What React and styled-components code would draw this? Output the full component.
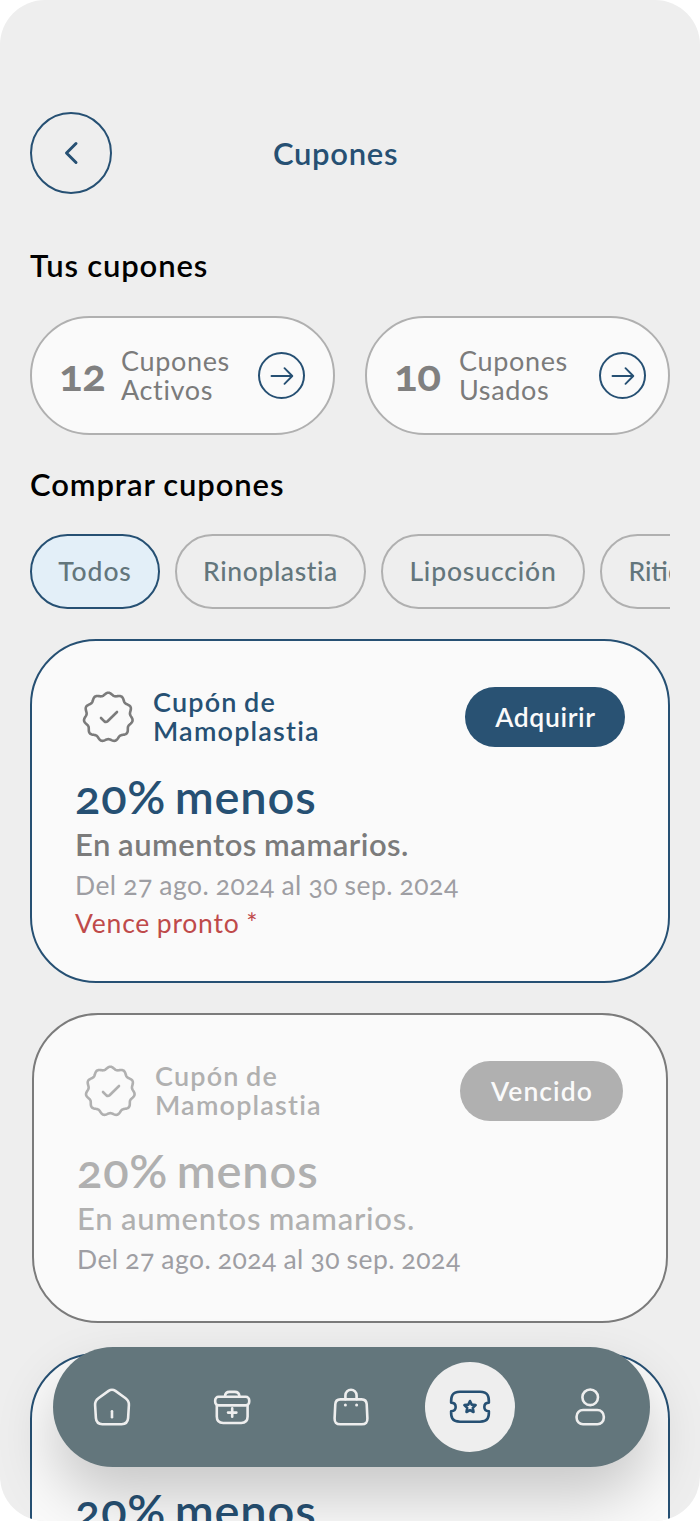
import React from 'react';
import styled, { createGlobalStyle } from 'styled-components';

const GlobalStyle = createGlobalStyle`
  * { box-sizing: border-box; }
  body {
    margin: 0;
    background: #ffffff;
    font-family: Lato, 'Open Sans', sans-serif;
    font-variant-numeric: oldstyle-nums;
    font-variant-ligatures: none;
  }
  button {
    font-family: inherit;
    margin: 0;
    padding: 0;
  }
  h1, h2, h3, p { margin: 0; }
`;

const colors = {
  navy: '#265073',
  slate: '#63767c',
  grey: '#7b7b7b',
  muted: '#b0b0b0',
  date: '#9e9ea3',
  danger: '#bf4a4a',
  surface: '#fafafa',
  background: '#eeeeee',
};

const Screen = styled.div`
  position: relative;
  width: 700px;
  height: 1521px;
  overflow: hidden;
  border-radius: 45px;
  background: ${colors.background};
  padding: 112px 30px 0;
`;

const Header = styled.header`
  display: grid;
  grid-template-columns: 82px 1fr 82px;
  align-items: center;
  width: 611px;
  height: 82px;
`;

const BackButton = styled.button`
  display: flex;
  align-items: center;
  justify-content: center;
  width: 82px;
  height: 82px;
  border: 2px solid ${colors.navy};
  border-radius: 50%;
  background: none;
  color: ${colors.navy};
`;

const PageTitle = styled.h1`
  padding-bottom: 1px;
  color: ${colors.navy};
  font-size: 31px;
  font-weight: 600;
  letter-spacing: 0.7px;
  line-height: 36px;
  text-align: center;
`;

const SectionTitle = styled.h2`
  margin-top: ${props => props.$top}px;
  color: #000000;
  font-size: 31px;
  font-weight: 600;
  letter-spacing: 0.9px;
  word-spacing: -0.5px;
  line-height: 36px;
`;

const StatRow = styled.div`
  display: flex;
  gap: 30px;
  margin-top: 33px;
`;

const StatPill = styled.div`
  display: flex;
  align-items: center;
  width: 305px;
  height: 119px;
  padding: 0 ${props => props.$end}px 0 27px;
  border: 2px solid ${colors.muted};
  border-radius: 60px;
  background: ${colors.surface};
  color: ${colors.grey};
`;

const StatCount = styled.span`
  width: ${props => props.$width}px;
  padding-bottom: 3px;
  color: #808080;
  font-size: 44px;
  font-weight: 700;
  letter-spacing: -0.5px;
  line-height: 50px;
`;

const StatLabel = styled.span`
  flex: 1;
  padding-bottom: 1px;
  font-size: 27px;
  letter-spacing: 0.65px;
  line-height: 29.5px;
`;

const RoundLink = styled.button`
  display: flex;
  align-items: center;
  justify-content: center;
  width: 47px;
  height: 47px;
  border: 2px solid ${colors.navy};
  border-radius: 50%;
  background: none;
  color: ${colors.navy};
`;

const ChipRow = styled.div`
  display: flex;
  gap: 15px;
  margin-top: 32px;
  overflow: hidden;
`;

const Chip = styled.button`
  flex: none;
  width: ${props => props.$width}px;
  height: 75px;
  padding-bottom: 1px;
  border: 2px solid ${props => (props.$active ? colors.navy : colors.muted)};
  border-radius: 38px;
  background: ${props => (props.$active ? '#e3eff8' : 'transparent')};
  color: ${colors.slate};
  font-size: 26.5px;
  font-weight: 500;
  letter-spacing: ${props => props.$tracking}px;
  line-height: 32px;
`;

const CouponList = styled.div`
  display: flex;
  flex-direction: column;
  gap: 30px;
  margin-top: 30px;
`;

const Card = styled.article`
  flex: none;
  height: ${props => (props.$expired ? 310 : 344)}px;
  margin: 0 ${props => (props.$expired ? 2 : 0)}px;
  padding: 46px 43px 0;
  border: 2px solid ${props => (props.$expired ? colors.grey : colors.navy)};
  border-radius: 66px;
  background: ${colors.surface};
  color: ${props => (props.$expired ? colors.muted : colors.navy)};
`;

const CardHead = styled.div`
  display: flex;
  align-items: center;
  height: 60px;
`;

const Seal = styled.svg`
  flex: none;
  margin: 0 12px 0 0;
  color: ${props => (props.$expired ? colors.muted : colors.grey)};
`;

const CardName = styled.h3`
  flex: 1;
  padding-bottom: 2px;
  font-size: 27px;
  font-weight: 600;
  letter-spacing: 1.2px;
  word-spacing: -1.5px;
  line-height: 29.5px;
`;

const ActionButton = styled.button`
  width: ${props => (props.$expired ? 163 : 160)}px;
  height: 60px;
  padding: 0 0 1px 1px;
  border: none;
  border-radius: 30px;
  background: ${props => (props.$expired ? colors.muted : '#295273')};
  color: #fafafa;
  font-size: 26.5px;
  font-weight: 600;
  letter-spacing: ${props => (props.$expired ? 1.05 : 0.65)}px;
  line-height: 32px;
`;

const Discount = styled.p`
  margin-top: 22px;
  font-size: 47px;
  font-weight: 600;
  letter-spacing: 0.8px;
  word-spacing: -4px;
  line-height: 54px;
`;

const Description = styled.p`
  padding-top: 1px;
  color: ${props => (props.$expired ? colors.muted : colors.grey)};
  font-size: 31px;
  font-weight: ${props => (props.$expired ? 500 : 600)};
  letter-spacing: ${props => (props.$expired ? 0.75 : 0.5)}px;
  word-spacing: -1px;
  line-height: 40px;
`;

const Dates = styled.p`
  padding-top: 1px;
  color: ${colors.date};
  font-size: 26.5px;
  letter-spacing: 0.45px;
  word-spacing: -0.6px;
  line-height: 40px;
`;

const Warning = styled.p`
  color: ${colors.danger};
  font-size: 26.5px;
  letter-spacing: 0.8px;
  word-spacing: -1px;
  line-height: 36px;
`;

const NavBar = styled.nav`
  position: absolute;
  left: 52.5px;
  bottom: 54.5px;
  display: flex;
  align-items: center;
  width: 597px;
  height: 120px;
  border-radius: 60px;
  background: ${colors.slate};
  box-shadow: 0 30px 60px rgba(0, 0, 0, 0.2);
`;

const NavItem = styled.div`
  flex: 1;
  display: flex;
  justify-content: center;
`;

const NavButton = styled.button`
  display: flex;
  align-items: center;
  justify-content: center;
  width: 90px;
  height: 90px;
  border: none;
  border-radius: 50%;
  background: ${props => (props.$active ? colors.background : 'transparent')};
  color: ${props => (props.$active ? colors.navy : colors.background)};
`;

// Closed wavy outline with eleven lobes
const sealPath = (() => {
  const points = [];
  for (let deg = 0; deg < 360; deg += 2) {
    const t = (deg * Math.PI) / 180;
    const r = 23.2 + 1.3 * Math.cos(11 * t);
    points.push(`${(33.3 + r * Math.sin(t)).toFixed(2)} ${(30.2 - r * Math.cos(t)).toFixed(2)}`);
  }
  return `M${points.join('L')}Z`;
})();

const SealIcon = ({ expired }) => (
  <Seal
    $expired={expired}
    width="66"
    height="60"
    viewBox="0 0 66 60"
    fill="none"
    stroke="currentColor"
    strokeWidth="2.6"
    strokeLinecap="round"
    strokeLinejoin="round"
  >
    <path d={sealPath} />
    <path d="M26 31 L29.4 34.4 Q31 35.6 32.6 34.2 L42 25" />
  </Seal>
);

const NavIcon = ({ children }) => (
  <svg
    width="48"
    height="48"
    viewBox="0 0 48 48"
    fill="none"
    stroke="currentColor"
    strokeWidth="2.6"
    strokeLinecap="round"
    strokeLinejoin="round"
  >
    {children}
  </svg>
);

const HomeIcon = () => (
  <NavIcon>
    <path d="M20.6 7.9Q24 5.6 27.4 7.9L37.6 15.2Q41.1 17.8 40.9 22L40.1 35.2Q39.6 41.2 33.6 41.2H14.4Q8.4 41.2 7.9 35.2L7.1 22Q6.9 17.8 10.4 15.2Z" />
    <path d="M24 28.3v6" />
  </NavIcon>
);

const KitIcon = () => (
  <NavIcon>
    <rect x="7.2" y="13.8" width="34" height="8.6" rx="3.4" />
    <path d="M8.8 22.6V33.6Q8.8 40 15.2 40H33.2Q39.6 40 39.6 33.6V22.6" />
    <path d="M17 13.4Q17.2 8.9 21.6 8.9H26.8Q31.2 8.9 31.4 13.4" />
    <path d="M24.2 25.4v8.4M20 29.6h8.4" />
  </NavIcon>
);

const BagIcon = () => (
  <NavIcon>
    <path d="M13.4 16.4H34.6Q39.4 16.4 39.7 21.2L40.4 35.4Q40.6 41.3 34.8 41.3H13.2Q7.4 41.3 7.6 35.4L8.3 21.2Q8.6 16.4 13.4 16.4Z" />
    <path d="M18.4 16.2V12.4A5.6 5.6 0 0 1 29.6 12.4V16.2" />
    <circle cx="18.4" cy="22" r="1.5" fill="currentColor" stroke="none" />
    <circle cx="29.6" cy="22" r="1.5" fill="currentColor" stroke="none" />
  </NavIcon>
);

const CouponIcon = () => (
  <NavIcon>
    <path d="M5.1 19.6C5 14 5.6 8.7 14 8.7H34C42.4 8.7 43 14 42.9 19.6C36.8 20 36.8 27.8 42.9 28.2C43 33.8 42.4 38.7 34 38.7H14C5.6 38.7 5 33.8 5.1 28.2C11.2 27.8 11.2 20 5.1 19.6Z" />
    <path d="M24 18L25.7 21.6L29.6 22.1L26.8 24.9L27.5 29L24 27.1L20.5 29L21.2 24.9L18.4 22.1L22.3 21.6Z" />
  </NavIcon>
);

const UserIcon = () => (
  <NavIcon>
    <circle cx="24.2" cy="14.3" r="7.8" />
    <rect x="10.6" y="27" width="27.2" height="14.2" rx="6.4" />
  </NavIcon>
);

const StatCard = ({ count, countWidth, status, end }) => (
  <StatPill $end={end}>
    <StatCount $width={countWidth}>{count}</StatCount>
    <StatLabel>
      Cupones
      <br />
      {status}
    </StatLabel>
    <RoundLink>
      <svg width="26" height="20" viewBox="0 0 26 20" fill="none" stroke="currentColor" strokeWidth="1.9" strokeLinecap="round" strokeLinejoin="round">
        <path d="M2.5 10H23M15.5 2.2L23.3 10L15.5 17.8" />
      </svg>
    </RoundLink>
  </StatPill>
);

const CouponCard = ({ expired, soon }) => (
  <Card $expired={expired}>
    <CardHead>
      <SealIcon expired={expired} />
      <CardName>
        Cupón de
        <br />
        Mamoplastia
      </CardName>
      <ActionButton $expired={expired}>{expired ? 'Vencido' : 'Adquirir'}</ActionButton>
    </CardHead>
    <Discount>20% menos</Discount>
    <Description $expired={expired}>En aumentos mamarios.</Description>
    <Dates>Del 27 ago. 2024 al 30 sep. 2024</Dates>
    {soon && <Warning>Vence pronto *</Warning>}
  </Card>
);

const categories = [
  { name: 'Todos', width: 130, tracking: 0.9 },
  { name: 'Rinoplastia', width: 191, tracking: 0.6 },
  { name: 'Liposucción', width: 204, tracking: 0.85 },
  { name: 'Ritidoplastia', width: 202, tracking: 0 },
];

const navItems = [
  { id: 'home', Icon: HomeIcon },
  { id: 'kit', Icon: KitIcon },
  { id: 'bag', Icon: BagIcon },
  { id: 'coupons', Icon: CouponIcon },
  { id: 'user', Icon: UserIcon },
];

const App = () => (
  <>
    <GlobalStyle />
    <Screen>
      <Header>
        <BackButton>
          <svg width="24" height="28" viewBox="0 0 24 28" fill="none" stroke="currentColor" strokeWidth="3" strokeLinecap="round" strokeLinejoin="round">
            <path d="M17 4.5L7.5 14L17 23.5" />
          </svg>
        </BackButton>
        <PageTitle>Cupones</PageTitle>
      </Header>

      <SectionTitle $top={53}>Tus cupones</SectionTitle>
      <StatRow>
        <StatCard count="12" countWidth={62} status="Activos" end={28} />
        <StatCard count="10" countWidth={65} status="Usados" end={22} />
      </StatRow>

      <SectionTitle $top={31}>Comprar cupones</SectionTitle>
      <ChipRow>
        {categories.map((category, index) => (
          <Chip
            key={category.name}
            $width={category.width}
            $tracking={category.tracking}
            $active={index === 0}
          >
            {category.name}
          </Chip>
        ))}
      </ChipRow>

      <CouponList>
        <CouponCard soon />
        <CouponCard expired />
        <CouponCard soon />
      </CouponList>

      <NavBar>
        {navItems.map(({ id, Icon }) => (
          <NavItem key={id}>
            <NavButton $active={id === 'coupons'}>
              <Icon />
            </NavButton>
          </NavItem>
        ))}
      </NavBar>
    </Screen>
  </>
);

export default App;
